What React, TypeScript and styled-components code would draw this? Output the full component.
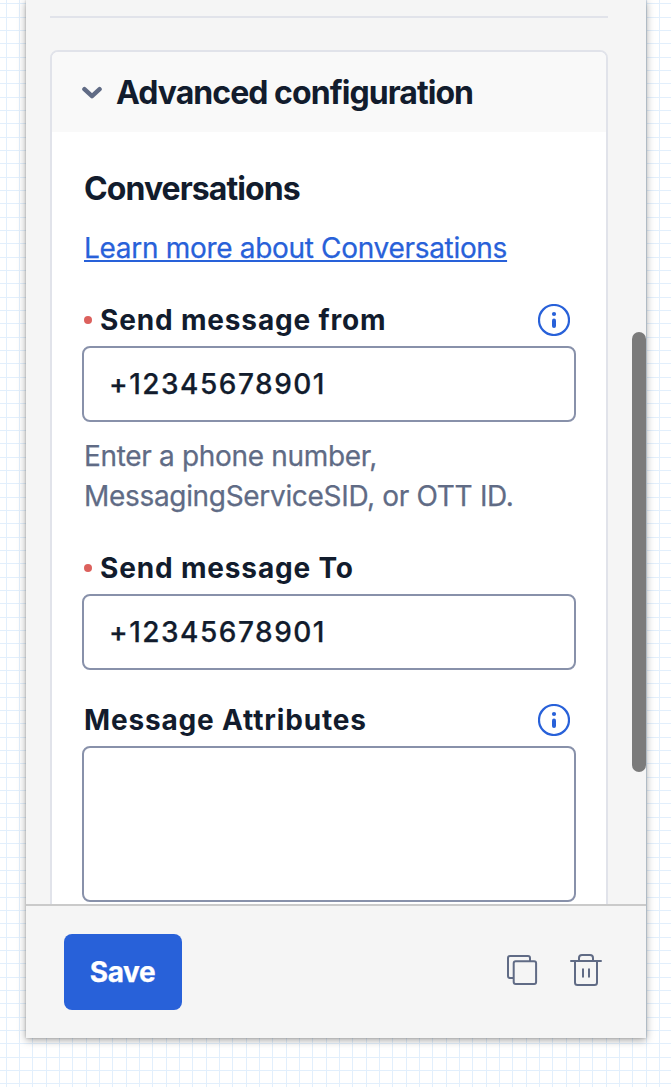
import React from "react";
import styled, { createGlobalStyle } from "styled-components";

const GlobalStyle = createGlobalStyle`
  *, *::before, *::after { box-sizing: border-box; }
  body { margin: 0; font-family: "Inter", sans-serif; color: #121c2d; overflow: hidden; }
  h2, h3, p { margin: 0; }
`;

const gridLine = "#e2effc";

const Canvas = styled.div`
  height: 1087px;
  padding: 0 25px 49px 26px;
  background-color: #fff;
  background-image:
    linear-gradient(90deg, ${gridLine} 1px, transparent 1px, transparent 13px, ${gridLine} 13px, ${gridLine} 14px, transparent 14px, transparent 27px, ${gridLine} 27px, ${gridLine} 28px, transparent 28px),
    linear-gradient(180deg, ${gridLine} 1px, transparent 1px, transparent 14px, ${gridLine} 14px, ${gridLine} 15px, transparent 15px, transparent 27px, ${gridLine} 27px, ${gridLine} 28px, transparent 28px);
  background-size: 40px 40px;
  background-position: 19px 0, 0 3px;
`;

const Panel = styled.aside`
  display: flex;
  flex-direction: column;
  width: 620px;
  height: 1038px;
  background: #f5f5f5;
  box-shadow: 0 2px 8px rgba(0, 0, 0, 0.36), 0 0 2px rgba(0, 0, 0, 0.2);
`;

const ScrollRegion = styled.div`
  display: flex;
  flex: 1;
  min-height: 0;
  overflow: hidden;
`;

const Content = styled.div`
  width: 558px;
  margin: 16px 24px 0;
  flex: none;
`;

const Divider = styled.div`
  height: 2px;
  margin-bottom: 32px;
  background: #e1e3ea;
`;

const ScrollThumb = styled.div`
  width: 14px;
  height: 440px;
  margin-top: 332px;
  border-radius: 7px;
  background: #7b7b7b;
`;

const Card = styled.section`
  height: 900px;
  border: 2px solid #e1e3ea;
  border-radius: 8px;
  background: #fff;
  overflow: hidden;
`;

const CardHeader = styled.header`
  display: flex;
  align-items: center;
  gap: 14px;
  height: 80px;
  padding: 2px 0 0 30px;
  background: #f9f9f9;
`;

const Title = styled.h2`
  font-size: 32px;
  font-weight: 700;
  line-height: 40px;
  letter-spacing: -0.95px;
`;

const CardBody = styled.div`
  padding: 37px 30px 0;
`;

const Subtitle = styled.h3`
  padding-left: 2px;
  font-size: 32px;
  font-weight: 700;
  line-height: 40px;
  letter-spacing: -0.92px;
`;

const DocsLink = styled.a`
  display: block;
  width: max-content;
  margin: 19px 0 0 2px;
  font-size: 28px;
  line-height: 40px;
  letter-spacing: -0.31px;
  -webkit-text-stroke: 0.25px currentColor;
  color: #2861d9;
  text-decoration: underline;
  text-decoration-thickness: 2px;
  text-underline-offset: 2px;
  text-decoration-skip-ink: none;
`;

const Field = styled.div<{ $gap: number }>`
  margin-top: ${(p) => p.$gap}px;
`;

const LabelRow = styled.div`
  display: flex;
  align-items: center;
  height: 40px;
  padding: 0 6px 0 2px;
  margin-bottom: 6px;
`;

const RequiredDot = styled.span`
  width: 8px;
  height: 8px;
  margin-right: 8px;
  border-radius: 50%;
  background: #dc615d;
`;

const Label = styled.label`
  flex: 1;
  font-size: 28px;
  font-weight: 700;
  line-height: 40px;
  letter-spacing: 0.84px;
`;

const Input = styled.input`
  display: block;
  width: 100%;
  height: 76px;
  padding: 0 25px;
  border: 2px solid #8891aa;
  border-radius: 8px;
  background: #fff;
  color: #121c2d;
  font: 500 28px/40px "Inter", sans-serif;
  letter-spacing: 1.5px;
  -webkit-text-stroke: 0.25px currentColor;
  outline: none;
`;

const TextArea = styled.textarea`
  display: block;
  width: 100%;
  height: 156px;
  padding: 16px 26px;
  border: 2px solid #8891aa;
  border-radius: 8px;
  background: #fff;
  font: 500 28px/40px "Inter", sans-serif;
  resize: none;
  outline: none;
`;

const HelpText = styled.p`
  padding: 14px 0 0 2px;
  font-size: 28px;
  line-height: 40px;
  letter-spacing: -0.32px;
  -webkit-text-stroke: 0.25px currentColor;
  color: #606b85;
`;

const Footer = styled.footer`
  display: flex;
  align-items: center;
  height: 134px;
  padding: 0 43px 0 38px;
  border-top: 2px solid #cacaca;
`;

const SaveButton = styled.button`
  width: 118px;
  height: 76px;
  padding: 0 1px 0 0;
  border: 0;
  border-radius: 8px;
  background: #2861d9;
  color: #fff;
  font: 700 28px/40px "Inter", sans-serif;
  letter-spacing: -0.4px;
  -webkit-text-stroke: 0.25px currentColor;
`;

const Actions = styled.div`
  display: flex;
  gap: 28px;
  margin: 0 0 4px auto;
`;

const IconButton = styled.button`
  display: flex;
  padding: 0;
  border: 0;
  background: none;
  color: #606b85;
`;

const InfoIcon = () => (
  <svg width="32" height="32" viewBox="0 0 32 32" fill="none">
    <circle cx="16" cy="16" r="15" stroke="#2861d9" strokeWidth="2.2" />
    <circle cx="16" cy="10" r="2.1" fill="#2861d9" />
    <path d="M16 16.5v5.5" stroke="#2861d9" strokeWidth="4" strokeLinecap="round" />
  </svg>
);

const ChevronIcon = () => (
  <svg width="20" height="14" viewBox="0 0 20 14" fill="none">
    <path d="M2.4 3.2 10 10.2l7.6-7" stroke="#606b85" strokeWidth="4.4" strokeLinecap="round" strokeLinejoin="round" />
  </svg>
);

const CopyIcon = () => (
  <svg width="36" height="36" viewBox="0 0 36 36" fill="none" stroke="currentColor" strokeWidth="2">
    <path d="M10 26H7a2 2 0 0 1-2-2V6a2 2 0 0 1 2-2h18a2 2 0 0 1 2 2v3" />
    <rect x="10.7" y="9.3" width="22.4" height="22.7" rx="2" />
  </svg>
);

const TrashIcon = () => (
  <svg width="36" height="36" viewBox="0 0 36 36" fill="none" stroke="currentColor" strokeWidth="2" strokeLinecap="round">
    <path d="M4 9h30M12 9V6a3 3 0 0 1 3-3h8a3 3 0 0 1 3 3v3M8 9v21.5a2.5 2.5 0 0 0 2.5 2.5h17a2.5 2.5 0 0 0 2.5-2.5V9M16 17.2v7.6M22 17.2v7.6" />
  </svg>
);

interface FormFieldProps {
  label: string;
  gap: number;
  required?: boolean;
  info?: boolean;
  children: React.ReactNode;
}

const FormField = ({ label, gap, required, info, children }: FormFieldProps) => (
  <Field $gap={gap}>
    <LabelRow>
      {required && <RequiredDot />}
      <Label>{label}</Label>
      {info && <InfoIcon />}
    </LabelRow>
    {children}
  </Field>
);

export default function App() {
  return (
    <>
      <GlobalStyle />
      <Canvas>
        <Panel>
          <ScrollRegion>
            <Content>
              <Divider />
              <Card>
                <CardHeader>
                  <ChevronIcon />
                  <Title>Advanced configuration</Title>
                </CardHeader>
                <CardBody>
                  <Subtitle>Conversations</Subtitle>
                  <DocsLink href="#">Learn more about Conversations</DocsLink>
                  <FormField label="Send message from" gap={32} required info>
                    <Input defaultValue="+12345678901" />
                    <HelpText>
                      Enter a phone number,
                      <br />
                      MessagingServiceSID, or OTT ID.
                    </HelpText>
                  </FormField>
                  <FormField label="Send message To" gap={32} required>
                    <Input defaultValue="+12345678901" />
                  </FormField>
                  <FormField label="Message Attributes" gap={30} info>
                    <TextArea />
                  </FormField>
                </CardBody>
              </Card>
            </Content>
            <ScrollThumb />
          </ScrollRegion>
          <Footer>
            <SaveButton>Save</SaveButton>
            <Actions>
              <IconButton aria-label="Duplicate"><CopyIcon /></IconButton>
              <IconButton aria-label="Delete"><TrashIcon /></IconButton>
            </Actions>
          </Footer>
        </Panel>
      </Canvas>
    </>
  );
}
